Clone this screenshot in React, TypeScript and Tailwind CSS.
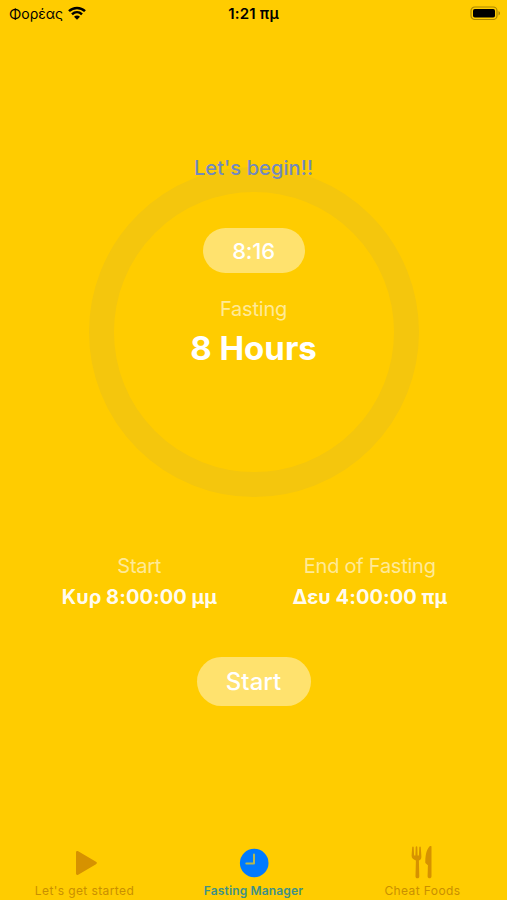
import React from 'react';

const PlayIcon = () => (
  <svg className="w-[30px] h-[32px]" viewBox="0 0 30 32" fill="currentColor">
    <path d="M6 5.400c0-1.300 1-1.800 2.200-1.200l17.800 10.600c1.200.7 1.200 1.700 0 2.400L8.200 27.800C7 28.400 6 27.900 6 26.600z" />
  </svg>
);

const ClockIcon = () => (
  <svg className="w-[30px] h-[32px]" viewBox="0 0 30 32">
    <circle cx="15.200" cy="16" r="14.300" fill="#007aff" />
    <path d="M15 7.600V16.600H7.300" fill="none" stroke="#b5b84f" strokeWidth="2" strokeLinecap="round" strokeLinejoin="round" />
  </svg>
);

const CutleryIcon = () => (
  <svg className="w-[30px] h-[34px]" viewBox="1 1 30 34" fill="currentColor">
    <path d="M5.200 2.200c.1-1 1.400-1 1.500 0l.4 8.300h1.300l.3-8.400c.1-1 1.500-1 1.600 0l.3 8.400h1.300l.4-8.300c.1-1 1.400-1 1.500 0l.6 9.200c.1 2.300-1 3.400-2.500 4.200l.4 15.800c0 2.600-3.800 2.600-3.800 0L8.900 15.600c-2.900-1.300-4.400-2.400-4.300-5z" />
    <path d="M24.500 2v29.300c0 2.700-3.900 2.700-3.900 0l.3-11-2-1.700c-.6-.6-.7-1.100-.6-2.300.2-7.500 1.500-12.200 4.600-15.300.8-.7 1.600-.2 1.600 1z" />
  </svg>
);

const StatusBar = () => (
  <div className="grid grid-cols-3 h-7 items-center text-black">
    <div className="flex items-center pl-[9px] gap-[5px]">
      <span className="text-[14px] leading-5">Φορέας</span>
      <svg className="w-[18px] h-[14px] -mt-0.5" viewBox="0 0 18 14" fill="none" stroke="currentColor" strokeWidth="2.500">
        <path d="M1 5.200C5.500.8 12.500.8 17 5.200" />
        <path d="M4 8.300c2.900-2.700 7.100-2.700 10 0" />
        <path d="M9 13.700 6 10.700c1.700-1.600 4.300-1.600 6 0z" fill="currentColor" stroke="none" />
      </svg>
    </div>
    <span className="text-center text-[15px] leading-5 font-semibold tracking-[0.2px]">1:21 πμ</span>
    <svg className="justify-self-end mr-1.5 -mt-0.5 w-[31px] h-[15px]" viewBox="0 0 31 15">
      <rect x="1" y="1" width="26" height="12.500" rx="3.800" fill="none" stroke="#a98700" strokeWidth="1.200" />
      <rect x="3" y="3" width="22" height="8.500" rx="1.800" fill="#000" />
      <path d="M28.500 5v4.500c2-.8 2-3.700 0-4.500z" fill="#a98700" />
    </svg>
  </div>
);

const TimeBlock = ({ label, value }: { label: string; value: string }) => (
  <div className="flex flex-col items-center gap-[3px] whitespace-nowrap">
    <span className="text-[20px] leading-7 tracking-[-0.25px] text-white/60">{label}</span>
    <span className="text-[20px] leading-7 font-bold tracking-[0.050px] text-white/95">{value}</span>
  </div>
);

const TABS = [
  { label: "Let's get started", icon: PlayIcon, active: false },
  { label: 'Fasting Manager', icon: ClockIcon, active: true },
  { label: 'Cheat Foods', icon: CutleryIcon, active: false },
];

const App: React.FC = () => {
  return (
    <div className="flex flex-col w-full h-[900px] overflow-hidden bg-[#ffcc00] font-['Inter','Noto_Sans',sans-serif]">
      <StatusBar />

      <main className="flex-1 flex flex-col items-center pt-[126px]">
        <h1 className="relative z-10 text-[20px] leading-7 font-medium tracking-[0.1px] text-[#7189c0]">Let's begin!!</h1>

        {/* Progress ring */}
        <div className="-mt-[15px] shrink-0 w-[330px] h-[330px] rounded-full border-[25px] border-[#f4c60d] flex flex-col items-center whitespace-nowrap">
          <div className="mt-9 w-[102px] h-[45px] rounded-full bg-[#ffe26e] flex items-center justify-center pt-px text-[22px] font-medium tracking-[-0.2px] text-white">8:16</div>
          <span className="mt-[22px] text-[20px] leading-7 tracking-[-0.2px] text-white/60">Fasting</span>
          <span className="mt-[5px] text-[33px] leading-10 font-bold text-white">8 Hours</span>
        </div>

        <div className="mt-[55px] w-full pl-6 pr-[22px] grid grid-cols-2">
          <TimeBlock label="Start" value="Κυρ 8:00:00 μμ" />
          <TimeBlock label="End of Fasting" value="Δευ 4:00:00 πμ" />
        </div>

        <button className="mt-[46px] w-[114px] h-[49px] rounded-full bg-[#ffe26e] text-[24px] font-medium text-white">Start</button>
      </main>

      <nav className="grid grid-cols-3 h-[55px] whitespace-nowrap">
        {TABS.map(({ label, icon: Icon, active }) => (
          <div key={label} className={active ? 'flex flex-col items-center' : 'flex flex-col items-center text-[#d69200]'}>
            <div className="h-9 flex items-center">
              <Icon />
            </div>
            <span className={active ? 'mt-0.5 text-[12px] leading-4 tracking-[0.15px] font-semibold text-[#3f9187]' : 'mt-0.5 text-[12px] leading-4 tracking-[0.4px] text-[#c98f00]'}>{label}</span>
          </div>
        ))}
      </nav>
    </div>
  );
};

export default App;
